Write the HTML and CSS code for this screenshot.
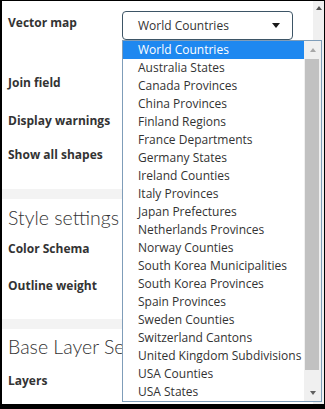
FILE: index.html
```html
<!DOCTYPE html>
<html lang="en">

<head>
    <meta charset="UTF-8">
    <meta name="viewport" content="width=device-width, initial-scale=1.0">
    <title>Map settings</title>
    <link rel="stylesheet" href="styles.css">
</head>

<body>
    <div class="frame">
        <!-- settings column -->
        <div class="main">
            <h2 class="section-title section-title--cut">Map settings</h2>

            <div class="field field--vector">
                <span class="field-label">Vector map</span>
                <div class="select">
                    <span class="select-value">World Countries</span>
                    <span class="caret caret--select"></span>
                </div>
            </div>
            <div class="field field--join"><span class="field-label">Join field</span></div>
            <div class="field field--warnings"><span class="field-label">Display warnings</span></div>
            <div class="field field--shapes"><span class="field-label">Show all shapes</span></div>

            <div class="divider divider--first"></div>

            <h2 class="section-title section-title--style">Style settings</h2>
            <div class="field field--schema"><span class="field-label">Color Schema</span></div>
            <div class="field field--outline"><span class="field-label">Outline weight</span></div>

            <div class="divider divider--second"></div>

            <h2 class="section-title section-title--base">Base Layer Settings</h2>
            <div class="field field--layers"><span class="field-label">Layers</span></div>
        </div>

        <!-- page scrollbar -->
        <div class="page-scroll">
            <span class="caret caret--up caret--dark"></span>
        </div>

        <!-- open list of the vector map select -->
        <div class="dropdown">
            <ul class="options">
                <li class="option option--active">World Countries</li>
                <li class="option">Australia States</li>
                <li class="option">Canada Provinces</li>
                <li class="option">China Provinces</li>
                <li class="option">Finland Regions</li>
                <li class="option">France Departments</li>
                <li class="option">Germany States</li>
                <li class="option">Ireland Counties</li>
                <li class="option">Italy Provinces</li>
                <li class="option">Japan Prefectures</li>
                <li class="option">Netherlands Provinces</li>
                <li class="option">Norway Counties</li>
                <li class="option">South Korea Municipalities</li>
                <li class="option">South Korea Provinces</li>
                <li class="option">Spain Provinces</li>
                <li class="option">Sweden Counties</li>
                <li class="option">Switzerland Cantons</li>
                <li class="option">United Kingdom Subdivisions</li>
                <li class="option">USA Counties</li>
                <li class="option">USA States</li>
            </ul>
            <div class="list-scroll">
                <div class="list-btn"><span class="caret caret--up caret--light"></span></div>
                <div class="list-thumb"></div>
                <div class="list-btn list-btn--down"><span class="caret caret--down caret--dark"></span></div>
            </div>
        </div>
    </div>
</body>

</html>
```

FILE: styles.css
```css
* {
    margin: 0;
    padding: 0;
    box-sizing: border-box;
}

body {
    width: 325px;
    height: 409px;
    background: #fff;
    font-family: "Open Sans", "Liberation Sans", sans-serif;
    color: #333;
    overflow: hidden;
}

.frame {
    position: relative;
    display: flex;
    width: 325px;
    height: 409px;
    border-style: solid;
    border-color: #000;
    border-width: 1px 1px 5px 2px;
    overflow: hidden;
}

.main {
    flex: 1;
    display: flex;
    flex-direction: column;
    overflow: hidden;
}

/* 区块标题，右侧被展开的列表盖住 */
.section-title {
    width: 120px;
    height: 28px;
    padding-left: 6px;
    font-family: Lato, "Open Sans", sans-serif;
    font-size: 19.5px;
    font-weight: 300;
    line-height: 28px;
    color: #333;
    white-space: nowrap;
    overflow: hidden;
}

.section-title--cut {
    margin-top: -24px;
}

.section-title--style {
    margin-top: 5px;
}

.section-title--base {
    margin-top: 4px;
}

.field {
    display: flex;
    align-items: flex-start;
    height: 18px;
}

.field-label {
    width: 120px;
    padding-left: 6px;
    font-size: 12px;
    font-weight: 700;
    line-height: 18px;
    color: #333;
    white-space: nowrap;
}

.field--vector {
    height: 29px;
    margin-top: 6px;
}

.field--vector .field-label {
    margin-top: 3px;
}

.field--join {
    margin-top: 34px;
}

.field--warnings {
    margin-top: 20px;
}

.field--shapes {
    margin-top: 16px;
}

.field--schema {
    margin-top: 8px;
}

.field--outline {
    margin-top: 19px;
}

.field--layers {
    margin-top: 11px;
}

.divider {
    height: 10px;
    background: #f3f3f3;
}

.divider--first {
    margin-top: 25px;
}

.divider--second {
    margin-top: 24px;
}

/* 下拉框 */
.select {
    display: flex;
    justify-content: space-between;
    align-items: center;
    width: 171px;
    height: 29px;
    padding: 0 12px 0 15px;
    border: 1px solid #3d5566;
    border-radius: 4px;
    font-size: 12px;
    line-height: 18px;
    color: #333;
}

.caret {
    display: block;
    width: 0;
    height: 0;
    border-left: 4px solid transparent;
    border-right: 4px solid transparent;
}

.caret--select {
    border-top: 5px solid #1a1a1a;
}

.caret--up {
    border-left-width: 3px;
    border-right-width: 3px;
    border-bottom: 4px solid #555;
}

.caret--down {
    border-left-width: 3px;
    border-right-width: 3px;
    border-top: 4px solid #555;
}

.caret--light {
    border-bottom-color: #a8a8a8;
}

.caret--dark.caret--down {
    border-top-color: #606060;
}

.page-scroll {
    width: 11px;
    padding-top: 5px;
    display: flex;
    justify-content: center;
    background: #f0f0f0;
}

/* 展开的选项列表，盖在内容之上 */
.dropdown {
    position: absolute;
    left: 120px;
    top: 39px;
    display: flex;
    width: 200px;
    height: 362px;
    background: #fff;
    border: 1px solid #7f9db9;
}

.options {
    flex: 1;
    list-style: none;
}

.option {
    height: 18px;
    padding-left: 15px;
    font-size: 12px;
    line-height: 18px;
    color: #333;
    white-space: nowrap;
}

.option--active {
    background: #1e88f0;
    color: #fff;
}

.list-scroll {
    display: flex;
    flex-direction: column;
    width: 17px;
    background: #f0f0f0;
}

.list-btn {
    display: flex;
    justify-content: center;
    align-items: center;
    height: 17px;
}

.list-thumb {
    height: 311px;
    margin: 1px 2px 0 1px;
    background: #c1c1c1;
}

.list-btn--down {
    margin-top: auto;
}
```
